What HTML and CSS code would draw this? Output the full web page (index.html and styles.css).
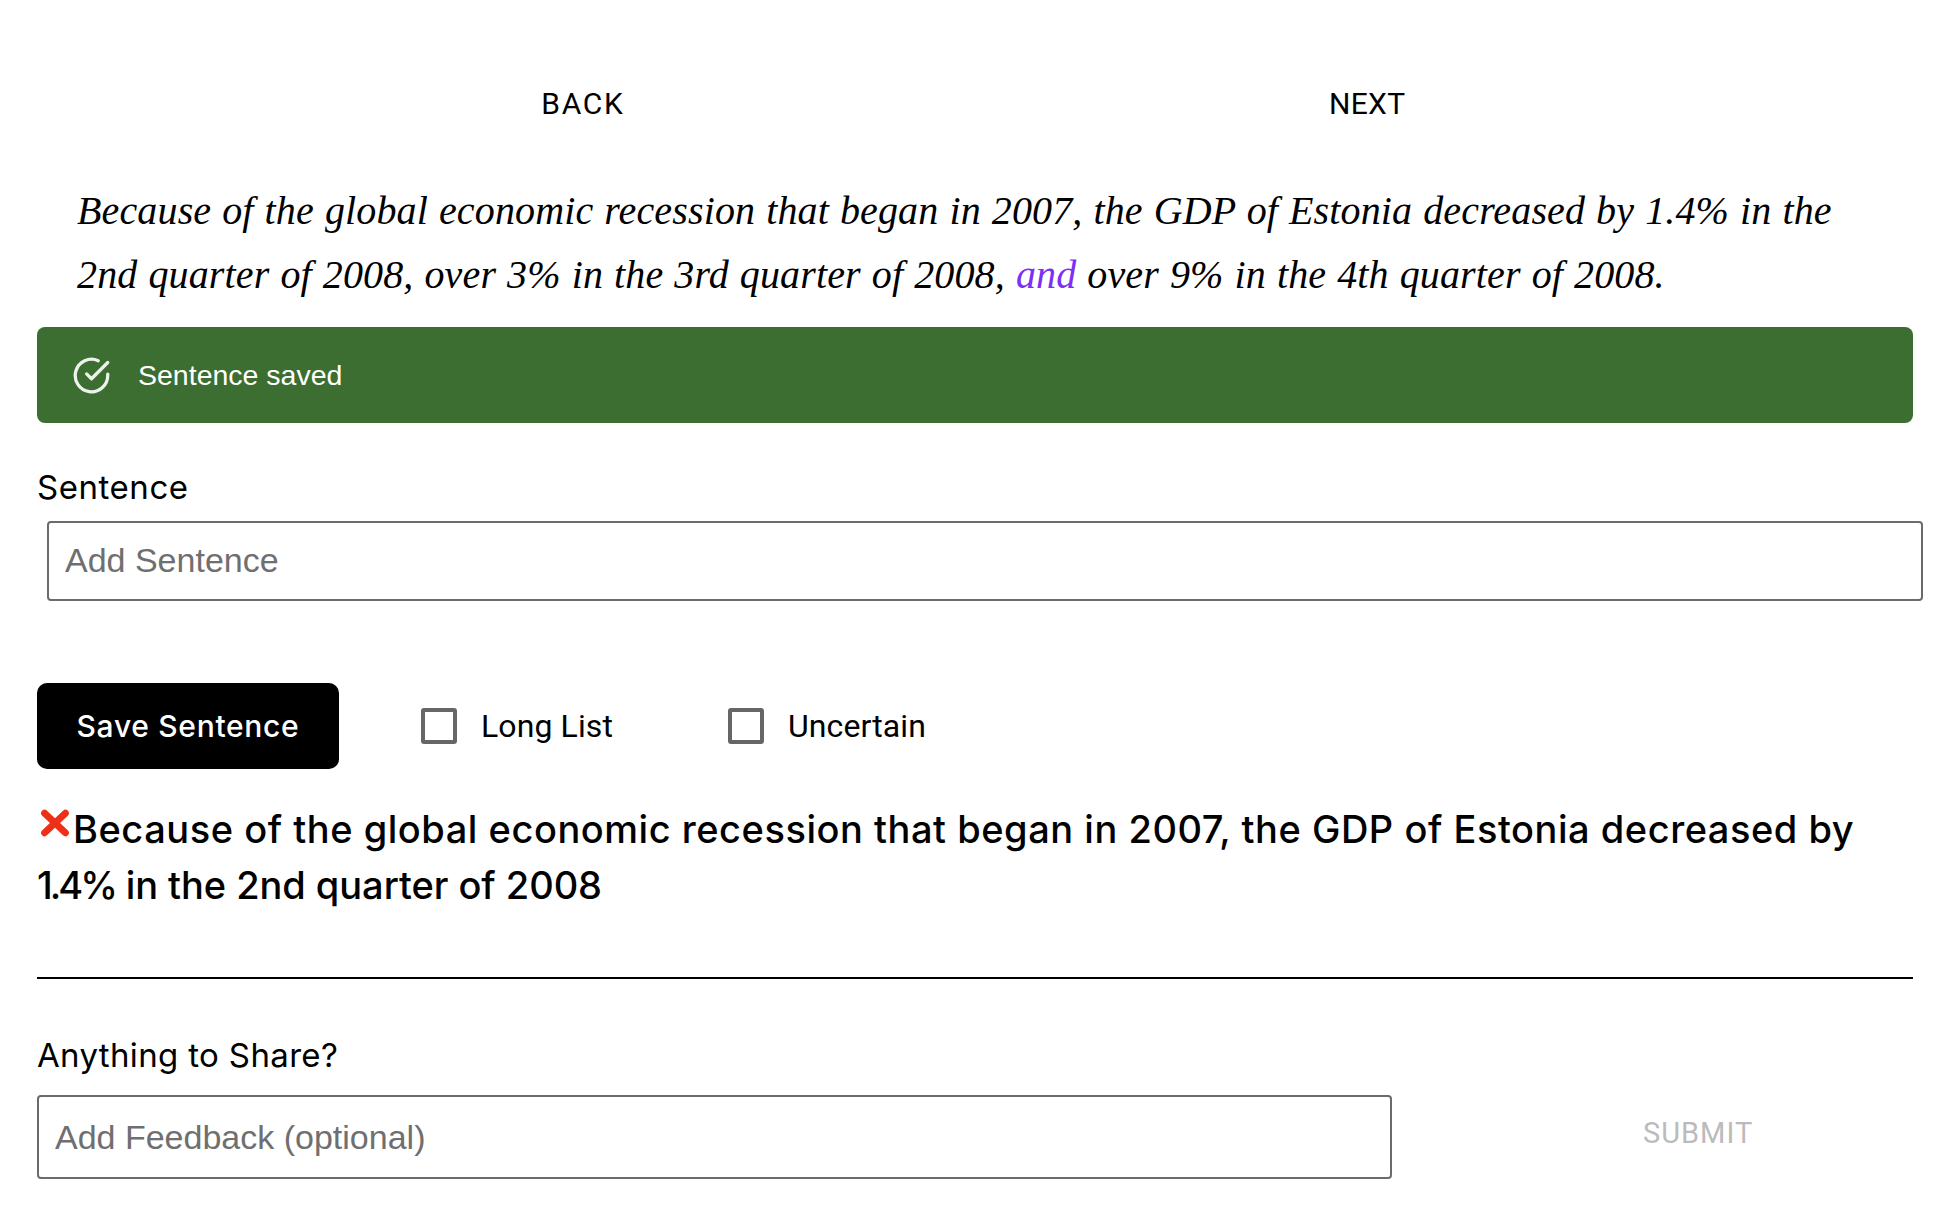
FILE: index.html
```html
<!DOCTYPE html>
<html lang="en">
<head>
<meta charset="utf-8">
<title>Sentence</title>
<link rel="stylesheet" href="styles.css">
</head>
<body>
<main class="page">
  <nav class="nav">
    <a class="nav-link">BACK</a>
    <a class="nav-link">NEXT</a>
  </nav>
  <p class="passage">Because of the global economic recession that began in 2007, the GDP of Estonia decreased by 1.4% in the 2nd quarter of 2008, over 3% in the 3rd quarter of 2008, <span class="accent">and</span> over 9% in the 4th quarter of 2008.</p>
  <div class="alert">
    <svg class="alert-icon" viewBox="0 0 24 24" fill="none" stroke="#eef2ec" stroke-width="2" stroke-linecap="round" stroke-linejoin="round"><path d="M22 11.100V12a10 10 0 1 1-5.900-9.100"/><path d="M22 4 12 14l-3-3"/></svg>
    <span>Sentence saved</span>
  </div>
  <label class="field-label sentence-label">Sentence</label>
  <input class="text-input sentence-input" placeholder="Add Sentence">
  <div class="actions">
    <button class="save">Save Sentence</button>
    <label class="check"><span class="box"></span>Long List</label>
    <label class="check"><span class="box"></span>Uncertain</label>
  </div>
  <p class="saved"><svg class="cross" viewBox="0 0 26 24"><path d="M4 3.500 22 20.500M22 3.500 4 20.500" stroke="#ee3018" stroke-width="6" stroke-linecap="round"/></svg>Because of the global economic recession that began in 2007, the GDP of Estonia decreased by <span class="saved-pct">1.4%</span> <span class="saved-tail">in the 2nd quarter of 2008</span></p>
  <hr class="rule">
  <label class="field-label share-label">Anything to Share?</label>
  <div class="feedback">
    <input class="text-input feedback-input" placeholder="Add Feedback (optional)">
    <span class="submit">SUBMIT</span>
  </div>
</main>
</body>
</html>
```
FILE: styles.css
```css
* { box-sizing: border-box; }
html, body { margin: 0; background: #fff; }
body { font-family: "Inter", "Liberation Sans", sans-serif; color: #000; }
.page { padding: 0 45px 0 37px; height: 1210px; overflow: hidden; }
.nav { display: flex; height: 104px; padding: 88px 0 0 0; }
.nav-link { font: 400 30px/32px "Roboto", sans-serif; text-align: center; white-space: nowrap; }
.nav-link:first-child { margin-left: 504px; width: 84px; letter-spacing: 1.700px; }
.nav-link:last-child { margin-left: 704px; width: 76px; letter-spacing: .300px; }
.passage { margin: 0; padding: 75px 50px 0 40px; font: italic 400 40px/63.600px "Liberation Serif", serif; width: 1876px; letter-spacing: .14px; word-spacing: .85px; }
.accent { color: #7b2ff7; }
.alert { display: flex; align-items: center; gap: 27px; width: 1876px; height: 96px; margin-top: 21px; padding-left: 35px; border-radius: 8px; background: #3c6e32; color: #fff; font: 400 28.500px/32px "Liberation Sans", sans-serif; }
.alert-icon { width: 39px; height: 39px; }
.field-label { display: block; font-family: "Inter", sans-serif; font-weight: 400; font-size: 33px; line-height: 40px; letter-spacing: .55px; }
.sentence-label { margin-top: 44px; }
.text-input { display: block; border: 2px solid #6b6b6b; border-radius: 4px; background: #fff; font: 400 34px "Liberation Sans", sans-serif; outline: 0; }
.text-input::placeholder { color: #6f6f6f; opacity: 1; }
.sentence-input { width: 1876px; height: 80px; margin: 14px 0 0 10px; padding: 0 16px 2px; }
.actions { display: flex; align-items: center; margin-top: 82px; }
.save { width: 302px; height: 86px; border: 0; border-radius: 10px; background: #000; color: #fff; font: 500 30px/36px "Inter", sans-serif; letter-spacing: .7px; padding: 0; }
.check { display: flex; align-items: center; gap: 24px; font: 400 32px/36px "Roboto", sans-serif; letter-spacing: .1px; }
.check:nth-child(2) { margin-left: 82px; }
.check:nth-child(3) { margin-left: 115px; }
.box { width: 36px; height: 36px; border: 4px solid #666; border-radius: 3px; }
.saved { width: 1876px; margin: 32px 0 0; font: 450 38px/56px "Inter", sans-serif; letter-spacing: .53px; }
.saved-pct { letter-spacing: -3px; }
.saved-tail { letter-spacing: -.05px; }
.cross { width: 30px; height: 28px; margin: 0 3px 0 3px; vertical-align: 6px; }
.rule { width: 1876px; margin: 64px 0 0; border: 0; border-top: 2px solid #000; }
.share-label { margin-top: 56px; letter-spacing: .35px; }
.feedback { display: flex; align-items: flex-start; margin-top: 20px; }
.feedback-input { width: 1355px; height: 84px; padding: 0 16px; }
.submit { margin: 22px 0 0 251px; font: 400 29px/32px "Roboto", sans-serif; letter-spacing: 1px; color: #bbb; }
```
